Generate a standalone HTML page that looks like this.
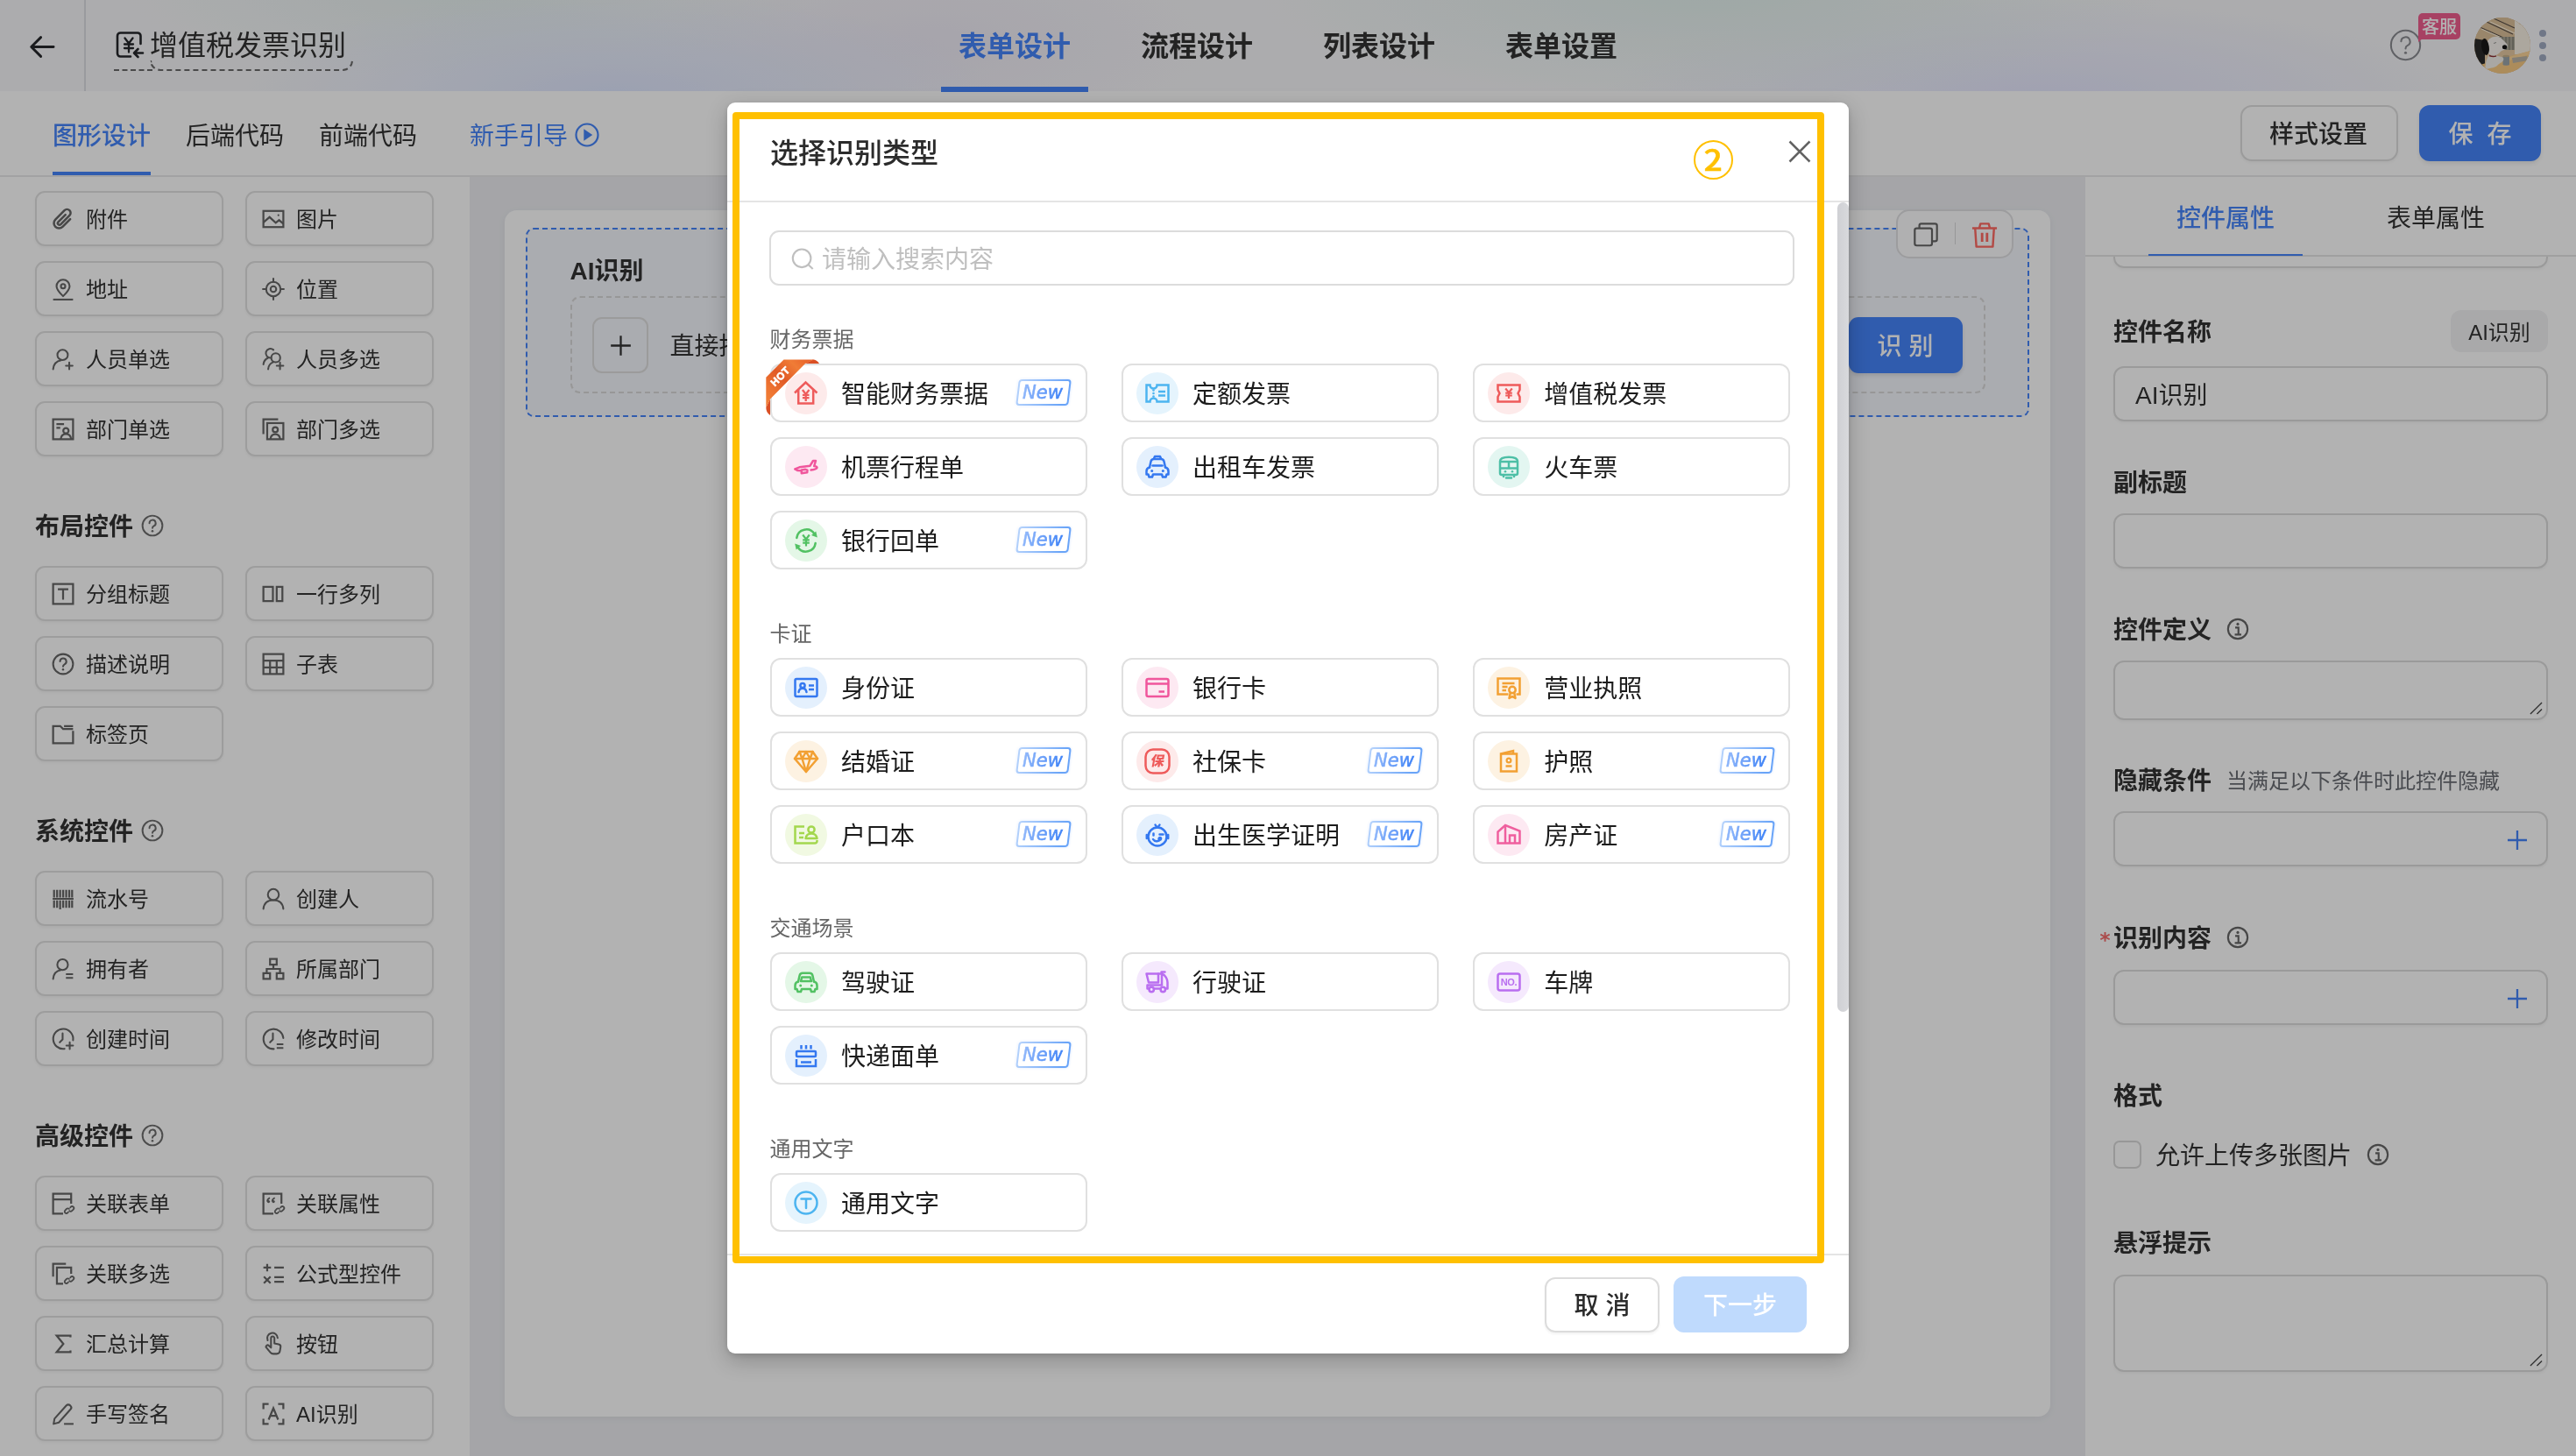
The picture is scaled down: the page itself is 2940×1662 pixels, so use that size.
<!DOCTYPE html>
<html lang="zh-CN">
<head>
<meta charset="utf-8">
<title>增值税发票识别 - 表单设计</title>
<style>
*{box-sizing:border-box;margin:0;padding:0}
html,body{width:2940px;height:1662px;overflow:hidden;background:#ecedf1}
body{font-family:"Liberation Sans","Noto Sans CJK SC",sans-serif;color:#333;-webkit-font-smoothing:antialiased}
#app{position:relative;width:2940px;height:1662px;overflow:hidden;background:#ecedf1}
#app div,#app svg,#app i,#app span.abs{position:absolute}
#hdr,#bar,#left,#canvas,#right,#modal{will-change:transform}
svg{display:block;overflow:visible}
i{font-style:normal}

/* ---------- top header ---------- */
#hdr{left:0;top:0;width:2940px;height:104px;z-index:1;background:
radial-gradient(ellipse 440px 120px at 700px 110px,rgba(222,230,255,1),rgba(222,230,255,0)),
radial-gradient(ellipse 400px 100px at 540px -10px,rgba(231,241,240,1),rgba(231,241,240,0)),
radial-gradient(ellipse 340px 120px at 1060px 50px,rgba(238,234,246,.9),rgba(238,234,246,0)),
radial-gradient(ellipse 520px 130px at 1950px -10px,rgba(227,241,238,1),rgba(227,241,238,0)),
radial-gradient(ellipse 500px 120px at 2330px 114px,rgba(229,231,255,1),rgba(229,231,255,0)),
#f7f7f9}
#hdr .back{left:33px;top:39px;width:29px;height:29px}
#hdr .vdiv{left:96px;top:0;width:2px;height:104px;background:#dcdde2}
#hdr .ticon{left:132px;top:35px;width:32px;height:32px}
#hdr .title{left:171px;top:30px;height:44px;line-height:44px;font-size:32px;color:#333;white-space:nowrap}
#hdr .tdash{left:130px;top:79px;width:44px;height:0;border-top:2px dashed #6a6a6a}
#hdr .tdash2{left:171px;top:69px;width:232px;height:12px;border:2px dashed #6a6a6a;border-top:none;border-radius:0 0 12px 12px}
#hdr .nt{top:0;width:168px;height:105px;line-height:107px;text-align:center;font-size:32px;font-weight:700;color:#333;white-space:nowrap}
#hdr .nt.on{color:#4684fa;border-bottom:6px solid #4684fa}
#hdr .help{left:2727px;top:33px;width:37px;height:37px}
#hdr .kf{left:2760px;top:15px;width:48px;height:30px;border-radius:5px 5px 5px 0;background:#f05d8f;color:#fff;font-size:20px;font-weight:500;font-family:"Liberation Sans","Noto Sans CJK SC Medium","Noto Sans CJK SC",sans-serif;line-height:33px;text-align:center;white-space:nowrap}
#hdr .kf::after{content:"";position:absolute;left:0;top:29px;border-left:5px solid #f05d8f;border-bottom:4px solid transparent}
#hdr .avatar{left:2824px;top:20px;width:64px;height:64px;border-radius:50%;overflow:hidden;background:#c9b79c}
#hdr .avatar svg{left:0;top:0;width:64px;height:64px}
#hdr .dots{left:2898px;top:34px;width:8px;height:36px}
#hdr .dots i{left:0;width:8px;height:8px;border-radius:50%;background:#a1abc2}
#hdr .dots i:nth-child(1){top:0}
#hdr .dots i:nth-child(2){top:14px}
#hdr .dots i:nth-child(3){top:28px}

/* ---------- second bar ---------- */
#bar{left:0;top:104px;width:2940px;height:98px;background:#fff;border-bottom:2px solid #e9e9ea}
#bar .bt{top:32px;height:40px;line-height:40px;font-size:28px;color:#333;white-space:nowrap}
#bar .bt.on{color:#4684fa;font-weight:500;font-family:"Liberation Sans","Noto Sans CJK SC Medium","Noto Sans CJK SC",sans-serif}
#bar .bt.on::after{content:"";position:absolute;left:0;right:0;top:60px;height:4px;background:#4684fa}
#bar .bt.guide{color:#4684fa}
#bar .play{left:655.5px;top:36px;width:28px;height:28px}
#bar .btn-style{left:2557px;top:16px;width:180px;height:64px;border:2px solid #dedede;border-radius:13px;background:#fff;font-size:28px;font-weight:500;font-family:"Liberation Sans","Noto Sans CJK SC Medium","Noto Sans CJK SC",sans-serif;line-height:64px;text-indent:-2px;text-align:center;color:#333;box-shadow:0 2px 3px rgba(0,0,0,.04)}
#bar .btn-save{left:2761px;top:16px;width:139px;height:64px;border-radius:12px;background:#4684fa;font-size:28px;font-weight:500;font-family:"Liberation Sans","Noto Sans CJK SC Medium","Noto Sans CJK SC",sans-serif;word-spacing:8px;line-height:68px;text-align:center;color:#fff;box-shadow:0 3px 4px rgba(0,0,0,.08)}

/* ---------- left palette ---------- */
#left{left:0;top:202px;width:536px;height:1460px;background:#fff;overflow:hidden}
#left .cbtn{margin-top:-202px;width:215px;height:63px;border:2px solid #e1e1e1;border-radius:11px;background:#fff;box-shadow:0 2px 3px rgba(0,0,0,.04);font-size:24px;color:#333;white-space:nowrap}
#left .cbtn .ci{left:17px;top:17px;width:26px;height:26px}
#left .cbtn span{position:absolute;left:56px;top:11px;height:40px;line-height:40px}
#left .lhead{margin-top:-200px;left:40px;height:40px;line-height:40px;font-size:28px;font-weight:700;color:#333;white-space:nowrap;width:300px}
#left .lhead span{position:absolute;left:0;top:0}
#left .lhead .hq{left:121px;top:5px;width:26px;height:26px}

/* ---------- canvas ---------- */
#canvas{left:576px;top:240px;width:1764px;height:1377px;background:#fff;border-radius:14px;box-shadow:0 2px 10px rgba(0,0,0,.05)}
#canvas .field{left:24px;top:20px;width:1716px;height:216px;border:2px dashed #4684fa;border-radius:9px;background:#f4f6fc}
#canvas .fl{left:48.5px;top:28px;height:40px;line-height:40px;font-size:28px;font-weight:700;color:#333;white-space:nowrap}
#canvas .drop{left:48.5px;top:76px;width:1615px;height:111px;border:2px dashed #d9d9d9;border-radius:11px}
#canvas .plus{left:23.5px;top:21.5px;width:64px;height:64px;border:2px solid #dedede;border-radius:11px}
#canvas .plus svg{left:13.5px;top:14px;width:33px;height:33px}
#canvas .dt{left:112px;top:36px;height:40px;line-height:40px;font-size:28px;color:#333;white-space:nowrap}
#canvas .recog{left:1457px;top:22px;width:130px;height:64px;border-radius:11px;background:#4684fa;color:#fff;font-size:28px;font-weight:500;font-family:"Liberation Sans","Noto Sans CJK SC Medium","Noto Sans CJK SC",sans-serif;line-height:68px;text-align:center;white-space:nowrap;box-shadow:0 3px 4px rgba(0,0,0,.1)}
#canvas .acts{left:1588px;top:-1px;width:134px;height:56px;border:2px solid #e0e0e2;border-radius:15px;background:#fdfdfe}
#canvas .acts .cp{left:18px;top:13px;width:28px;height:28px}
#canvas .acts i{left:64.5px;top:13px;width:1.5px;height:25px;background:#d9d9dc}
#canvas .acts .del{left:84px;top:12px;width:30px;height:30px}

/* ---------- right panel ---------- */
#right{left:2380px;top:202px;width:560px;height:1460px;background:#fff;overflow:hidden}
#right .rtabs{left:0;top:0;width:560px;height:91px;border-bottom:2px solid #e6e6e6;background:#fff;z-index:2}
#right .rt{top:0;width:176px;height:90px;line-height:96px;text-align:center;font-size:28px;color:#333;white-space:nowrap}
#right .rt.on{color:#4684fa;border-bottom:2px solid #4684fa;font-weight:500;font-family:"Liberation Sans","Noto Sans CJK SC Medium","Noto Sans CJK SC",sans-serif;}
#right .stub{left:32px;top:59px;width:496px;height:45px;border:2px solid #dddddd;border-radius:12px;box-shadow:0 2px 3px rgba(0,0,0,.04)}
#right .rl{left:32px;height:40px;line-height:40px;font-size:28px;font-weight:700;color:#333;white-space:nowrap;width:520px}
#right .rl em{font-style:normal;font-weight:400;font-size:24px;color:#6b6e74;margin-left:17px;vertical-align:top}
#right .rl .info{left:129px;top:5px;width:26px;height:26px}
#right .rl b{position:absolute;left:-15.5px;top:1px;color:#f56c6c;font-size:23px;font-weight:700;font-family:"DejaVu Sans","Liberation Sans",sans-serif}
#right .inp{left:32px;width:496px;height:63px;border:2px solid #dddddd;border-radius:12px;background:#fff;box-shadow:0 2px 3px rgba(0,0,0,.04)}
#right .inp span{position:absolute;left:23px;top:12px;height:40px;line-height:40px;font-size:28px;color:#333;white-space:nowrap}
#right .inp .pl{left:446.5px;top:18.5px;width:24px;height:24px}
#right .inp .rs{right:4px;bottom:4px;width:15px;height:15px}
#right .tag{left:417px;top:152px;width:111px;height:48px;border-radius:12px;background:#f2f2f4;font-size:24px;line-height:51px;text-align:center;color:#333;white-space:nowrap}
#right .chk{left:32px;top:1100px;width:32px;height:32px;border:2px solid #d9d9d9;border-radius:7px;background:#fff}
#right .chkt{left:80px;top:1098px;height:40px;line-height:40px;font-size:28px;color:#333;white-space:nowrap;width:420px}
#right .chkt .info{left:240.5px;top:5px;width:26px;height:26px}

/* ---------- mask & modal ---------- */
#mask{left:0;top:0;width:2940px;height:1662px;background:rgba(0,0,0,.3);z-index:10}
#modal{z-index:11;left:830px;top:117px;width:1280px;height:1428px;background:#fff;border-radius:9px;box-shadow:0 8px 24px rgba(0,0,0,.22),0 2px 6px rgba(0,0,0,.12)}
#modal .mh{left:49px;top:36px;height:44px;line-height:44px;font-size:32px;font-weight:500;font-family:"Liberation Sans","Noto Sans CJK SC Medium","Noto Sans CJK SC",sans-serif;color:#2b2b2b;white-space:nowrap}
#modal .mx{left:1211px;top:43px;width:26px;height:26px}
#modal .mbody{left:0;top:112px;width:1280px;height:1203px;border-top:2px solid #e4e4e4;overflow:hidden;padding:0}
#modal .mbody>div,#modal .mbody .sec>div,#modal .card{position:relative !important}
#modal .search{margin:32px 0 0 48px;width:1169.5px;height:63px;border:2px solid #dcdcdc;border-radius:11px}
#modal .search svg{left:23px;top:17.5px;width:26px;height:26px}
#modal .search span{position:absolute;left:58px;top:12px;height:40px;line-height:40px;font-size:28px;color:#bfbfbf;white-space:nowrap}
#modal .sec{margin:38px 0 0 48.5px;width:1231px}
#modal .search + .sec{margin-top:43.3px}
#modal .st{height:36px;line-height:37px;font-size:24px;color:#666;margin-bottom:10px}
#modal .grid{display:flex;flex-wrap:wrap;width:1231px}
#modal .card{width:362.4px;height:67px;margin:0 38.7px 17px 0;border:2px solid #e0e0e0;border-radius:12px;background:#fff}
#modal .card .circ{position:absolute;left:15.8px;top:7.5px;width:48px;height:48px;border-radius:50%}
#modal .card .circ svg{left:10px;top:10px;width:28px;height:28px}
#modal .card .cn{position:absolute;left:79.5px;top:13.5px;height:40px;line-height:40px;font-size:28px;color:#1c1c1c;white-space:nowrap}
#modal .card .new{position:absolute;right:17.5px;top:16px;width:60px;height:30px;border:2px solid #69a4f8;border-radius:4px;transform:skewX(-7deg);background:#fff;box-shadow:0 0 3px rgba(90,150,255,.3)}
#modal .card .new::after{content:"";position:absolute;left:-3px;top:-3px;right:-3px;bottom:-3px;background:linear-gradient(100deg,rgba(255,255,255,.52),rgba(255,255,255,.26) 45%,rgba(255,255,255,0) 85%)}
#modal .card .new i{position:absolute;left:0;top:0;width:56px;height:26px;line-height:26px;text-align:center;font-size:21px;letter-spacing:0;margin:-.5px 0 0 -1px;font-style:italic;color:#3b80f7;-webkit-text-stroke:.55px #3b80f7;transform:skewX(7deg);font-family:"DejaVu Sans","Liberation Sans",sans-serif}
#modal .card .hot{left:-6px;top:-6px;width:54px;height:54px}
#modal .sbar{left:1266px;top:114px;width:14px;height:1200px}
#modal .sbar i{left:0.5px;top:0;width:13px;height:924px;border-radius:6.5px;background:linear-gradient(90deg,#cfd0d4,#d8d9dc)}
#modal .mf{left:0;top:1314px;width:1280px;height:114px;border-top:2px solid #e4e4e4}
#modal .b-cancel{left:933px;top:25px;width:131px;height:63px;border:2px solid #dcdcdc;border-radius:12px;font-size:28px;font-weight:500;font-family:"Liberation Sans","Noto Sans CJK SC Medium","Noto Sans CJK SC",sans-serif;line-height:61px;text-align:center;color:#2b2b2b;white-space:nowrap;box-shadow:0 2px 3px rgba(0,0,0,.05)}
#modal .b-next{left:1080px;top:24px;width:152px;height:64px;border-radius:12px;background:#bfdafd;color:#fff;font-size:28px;font-weight:500;font-family:"Liberation Sans","Noto Sans CJK SC Medium","Noto Sans CJK SC",sans-serif;line-height:67px;text-align:center;white-space:nowrap}
#modal .hl{left:6px;top:11px;width:1246px;height:1314px;border:8px solid #ffc000;border-radius:4px}
#modal .step{left:1102.7px;top:42.6px;width:45px;height:45px;border:2.3px solid #ffc000;border-radius:50%}
#modal .step span{position:absolute;left:.8px;top:0;width:40.4px;height:40.4px;line-height:37.3px;text-align:center;color:#ffc000;-webkit-text-stroke:.45px #ffc000;font-size:33.5px;font-weight:500;font-family:"Noto Sans CJK SC Medium","Noto Sans CJK SC","Liberation Sans",sans-serif;transform:scaleX(1.12)}

</style>
</head>
<body>
<div id="app">
  <div id="hdr">
    <svg class="back" viewBox="0 0 32 32"><path d="M15 4L3 16l12 12M3.500 16H31" fill="none" stroke="#26282c" stroke-width="3.200" stroke-linecap="round" stroke-linejoin="round"/></svg>
    <div class="vdiv"></div>
    <svg class="ticon" viewBox="0 0 32 32"><g fill="none" stroke="#26282c" stroke-width="2.600" stroke-linecap="round" stroke-linejoin="round"><path d="M28.500 15V6a3.500 3.500 0 0 0-3.500-3.500H5.500A3.500 3.500 0 0 0 2 6v20a3.500 3.500 0 0 0 3.500 3.500H17"/><path d="M10.500 8.500l4.500 6 4.500-6M15 14.500v10M10 15.500h10M10 20h10" stroke-width="2.300"/><path d="M31 25.500H21.500M25.500 21l-4.500 4.500 4.500 4.500"/></g></svg>
    <div class="title">增值税发票识别</div>
    <div class="tdash"></div><div class="tdash2"></div>
    <div class="nav">
      <div class="nt on" style="left:1074px">表单设计</div>
      <div class="nt" style="left:1282px">流程设计</div>
      <div class="nt" style="left:1490px">列表设计</div>
      <div class="nt" style="left:1698px">表单设置</div>
    </div>
    <svg class="help" viewBox="0 0 40 40"><g fill="none" stroke="#8a8b91" stroke-width="2.200" stroke-linecap="round"><circle cx="20" cy="20" r="18"/><path d="M14.500 15.500a5.500 5.500 0 1 1 8 5c-1.700.900-2.500 1.900-2.500 3.800"/></g><circle cx="20" cy="29.500" r="1.700" fill="#8a8b91"/></svg>
    <div class="kf">客服</div>
    <div class="avatar"><svg viewBox="0 0 64 64"><rect width="64" height="64" fill="#e6c9a2"/><path d="M0 0h64v26L30 30 0 24z" fill="#dcc09a"/><g stroke="#5a5048" stroke-width="1.300" fill="none"><path d="M4 10l36 16M12 4l32 15M22 1l24 11"/></g><g stroke="#fff6e2" stroke-width="1" fill="none"><path d="M8 13l34 15M18 5l28 13"/></g><path d="M28 22h20v15H28z" fill="#a9a595"/><g stroke="#66655c" stroke-width=".800"><path d="M32 22v15M36 22v15M40 22v15M44 22v15"/></g><path d="M46 0h18v42H46z" fill="#f6efe2"/><path d="M46 0l6 8h12V0z" fill="#d9b88a"/><path d="M0 24l12 2v30L0 58z" fill="#2a2a2a"/><path d="M0 64V56l30-9 34-9v26z" fill="#f7c983"/><path d="M10 56l20-8 34-10v4L30 52 12 60z" fill="#fbd59a"/><path d="M43 46l17-2 2 5-18 3z" fill="#b9b3a8"/><path d="M32.500 44h7.500v9.500a3.750 1.200 0 0 1-7.500 0z" fill="#9aa4aa"/><ellipse cx="36.250" cy="44" rx="3.750" ry="1.200" fill="#c6b08a"/><path d="M15 46c0-3 4-4 8-3l8 2c2 .500 3 2 2 4l-2 2c-4 2-5 5-9 6l-9 2c-1-4 0-9 2-13z" fill="#f3f0ea"/><path d="M14 30c1-6 7-9 13-8 4 .800 6 4 9 7 2 1.500 2.500 4 1 6-2 2.500-6 2-8 5-2 2.500-6 4-10 3-4-1.500-6-7-5-13z" fill="#f6f3ee"/><path d="M17 43.500c3 1.200 6 1.200 8 .300" stroke="#8c2f33" stroke-width="1.400" fill="none"/><ellipse cx="12.500" cy="33.500" rx="4.300" ry="9.500" fill="#171717" transform="rotate(-8 12.500 33.500)"/><ellipse cx="34.600" cy="33.800" rx="2.700" ry="2.500" fill="#141414"/><path d="M22 29.500l3-1" stroke="#555" stroke-width=".600"/></svg></div>
    <div class="dots"><i></i><i></i><i></i></div>
  </div>
  <div id="bar">
    <div class="bt on" style="left:60px">图形设计</div>
    <div class="bt" style="left:212px">后端代码</div>
    <div class="bt" style="left:364px">前端代码</div>
    <div class="bt guide" style="left:536px">新手引导</div>
    <svg class="play" viewBox="0 0 28 28"><circle cx="14" cy="14" r="12.500" fill="none" stroke="#4684fa" stroke-width="2.200"/><path d="M10.300 7.300l9.900 6.700-9.900 6.700z" fill="#4684fa"/></svg>
    <div class="btn-style">样式设置</div>
    <div class="btn-save">保 存</div>
  </div>
  <div id="left">
<div class="cbtn" style="left:40px;top:218px"><svg class="ci" viewBox="0 0 24 24"><g transform="translate(12 12) rotate(45) scale(1.22) translate(-12 -11.5)" fill="none" stroke="#666666" stroke-width="1.9" stroke-linecap="round" stroke-linejoin="round" stroke-width="1.600"><path d="M16.400 7.200v9.300a4.400 4.400 0 0 1-8.800 0V5.400a3.100 3.100 0 0 1 6.200 0v10.800a1.500 1.500 0 0 1-3 0V7.400"/></g></svg><span>附件</span></div>
<div class="cbtn" style="left:280px;top:218px"><svg class="ci" viewBox="0 0 24 24"><g fill="none" stroke="#666666" stroke-width="2.050" stroke-linecap="butt" stroke-linejoin="miter"><rect x="1.5" y="3.5" width="21" height="17"/><path d="M1.5 15.5l6.5-5.5 6.5 6 3.5-2.8 4.5 3.8"/><circle cx="17.3" cy="8" r="1" fill="#666666" stroke="none"/></g></svg><span>图片</span></div>
<div class="cbtn" style="left:40px;top:298px"><svg class="ci" viewBox="0 0 24 24"><g fill="none" stroke="#666666" stroke-width="1.9" stroke-linecap="round" stroke-linejoin="round"><path d="M12 19.5c-4.600-4.400-6.900-7.500-6.900-10.500a6.900 6.900 0 0 1 13.800 0c0 3-2.300 6.100-6.900 10.500z"/><circle cx="12" cy="9" r="2.300"/><path d="M1.500 23h21" stroke-linecap="butt"/></g></svg><span>地址</span></div>
<div class="cbtn" style="left:280px;top:298px"><svg class="ci" viewBox="0 0 24 24"><g fill="none" stroke="#666666" stroke-width="1.9" stroke-linecap="round" stroke-linejoin="round"><circle cx="12" cy="12" r="7.600"/><circle cx="12" cy="12" r="3"/><path d="M12 1v3.400M12 19.600v3.400M1 12h3.400M19.600 12h3.400"/></g></svg><span>位置</span></div>
<div class="cbtn" style="left:40px;top:378px"><svg class="ci" viewBox="0 0 24 24"><g fill="none" stroke="#666666" stroke-width="1.9" stroke-linecap="round" stroke-linejoin="round"><circle cx="11.500" cy="7.500" r="5.500"/><path d="M1.500 22.500c.500-5.500 4-8.700 8.500-9.400"/><path d="M18.500 15.500v7M15 19h7"/></g></svg><span>人员单选</span></div>
<div class="cbtn" style="left:280px;top:378px"><svg class="ci" viewBox="0 0 24 24"><g fill="none" stroke="#666666" stroke-width="1.9" stroke-linecap="round" stroke-linejoin="round"><path d="M9.500 10.500a4.800 4.800 0 1 1 2.600-8.300"/><path d="M1.500 17.500c.4-3.400 2-5.500 4.600-6.600"/><circle cx="14.500" cy="10.500" r="4.700"/><path d="M6.500 22.500c.4-4 2.600-6.500 5.500-7.400"/><path d="M19 15.500v7M15.500 19h7"/></g></svg><span>人员多选</span></div>
<div class="cbtn" style="left:40px;top:458px"><svg class="ci" viewBox="0 0 24 24"><g fill="none" stroke="#666666" stroke-width="2.050" stroke-linecap="butt" stroke-linejoin="miter"><rect x="1.500" y="1.500" width="21" height="21"/><path d="M5 6.500h8M5 10.500h4"/><circle cx="15" cy="13.500" r="2.800"/><path d="M9.500 22.500c.4-3.600 2.600-5.500 5.500-5.500s5.100 1.900 5.500 5.500"/></g></svg><span>部门单选</span></div>
<div class="cbtn" style="left:280px;top:458px"><svg class="ci" viewBox="0 0 24 24"><g fill="none" stroke="#666666" stroke-width="2.050" stroke-linecap="butt" stroke-linejoin="miter"><path d="M1.500 17V1.500H17"/><rect x="5.500" y="5.500" width="17" height="17"/><circle cx="14" cy="12.500" r="2.700"/><path d="M8.800 22.500c.4-3.600 2.400-5.300 5.200-5.300s4.800 1.700 5.200 5.300"/></g></svg><span>部门多选</span></div>
<div class="lhead" style="top:580px"><span>布局控件</span><svg class="hq" viewBox="0 0 24 24"><g fill="none" stroke="#6e6e6e" stroke-width="1.800" stroke-linecap="round"><circle cx="12" cy="12" r="10.500"/><path d="M8.800 9.400a3.300 3.300 0 1 1 4.700 3c-1 .500-1.500 1.100-1.500 2.200"/></g><circle cx="12" cy="17.800" r="1.200" fill="#6e6e6e"/></svg></div>
<div class="cbtn" style="left:40px;top:646px"><svg class="ci" viewBox="0 0 24 24"><g fill="none" stroke="#666666" stroke-width="2.050" stroke-linecap="butt" stroke-linejoin="miter"><rect x="1.500" y="1.500" width="21" height="21"/><path d="M6.500 7h11M12 7v11"/></g></svg><span>分组标题</span></div>
<div class="cbtn" style="left:280px;top:646px"><svg class="ci" viewBox="0 0 24 24"><g fill="none" stroke="#666666" stroke-width="2.050" stroke-linecap="butt" stroke-linejoin="miter"><rect x="1.500" y="4.500" width="10" height="15"/><rect x="15.500" y="4.500" width="6" height="15"/></g></svg><span>一行多列</span></div>
<div class="cbtn" style="left:40px;top:726px"><svg class="ci" viewBox="0 0 24 24"><g fill="none" stroke="#666666" stroke-width="1.9" stroke-linecap="round" stroke-linejoin="round"><circle cx="12" cy="12" r="10.500"/><path d="M8.800 9.300a3.300 3.300 0 1 1 4.700 3c-1 .500-1.500 1.100-1.500 2.300"/><circle cx="12" cy="17.800" r="1.150" fill="#666666" stroke="none"/></g></svg><span>描述说明</span></div>
<div class="cbtn" style="left:280px;top:726px"><svg class="ci" viewBox="0 0 24 24"><g fill="none" stroke="#666666" stroke-width="2.050" stroke-linecap="butt" stroke-linejoin="miter"><rect x="1.500" y="1.500" width="21" height="21"/><path d="M1.500 8.500h21M1.500 15.500h21M8.500 8.500v14M15.500 8.500v14"/></g></svg><span>子表</span></div>
<div class="cbtn" style="left:40px;top:806px"><svg class="ci" viewBox="0 0 24 24"><g fill="none" stroke="#666666" stroke-width="2.050" stroke-linecap="butt" stroke-linejoin="miter"><path d="M22.500 8.500v13h-21v-18h7.500l3 3h10.500M13 3.500h9.500"/></g></svg><span>标签页</span></div>
<div class="lhead" style="top:928px"><span>系统控件</span><svg class="hq" viewBox="0 0 24 24"><g fill="none" stroke="#6e6e6e" stroke-width="1.800" stroke-linecap="round"><circle cx="12" cy="12" r="10.500"/><path d="M8.800 9.400a3.300 3.300 0 1 1 4.700 3c-1 .500-1.500 1.100-1.500 2.200"/></g><circle cx="12" cy="17.800" r="1.200" fill="#6e6e6e"/></svg></div>
<div class="cbtn" style="left:40px;top:994px"><svg class="ci" viewBox="0 0 24 24"><g fill="none" stroke="#666666" stroke-width="2.050" stroke-linecap="butt" stroke-linejoin="miter" stroke-width="1.600"><path d="M2.500 2.500v8M5.700 2.500v8M8.900 2.500v8M12.100 2.500v8M15.300 2.500v8M18.500 2.500v8M21.500 2.500v8M1 12h22M2.500 13.500v8M5.700 13.500v8M8.900 13.500v9.500M12.100 13.500v8M15.300 13.500v8M18.500 13.500v8M21.500 13.500v8"/></g></svg><span>流水号</span></div>
<div class="cbtn" style="left:280px;top:994px"><svg class="ci" viewBox="0 0 24 24"><g fill="none" stroke="#666666" stroke-width="1.9" stroke-linecap="round" stroke-linejoin="round"><circle cx="12" cy="7.500" r="5.800"/><path d="M1.500 22.500c.6-6 4.600-9.200 10.500-9.200s9.900 3.200 10.500 9.200"/></g></svg><span>创建人</span></div>
<div class="cbtn" style="left:40px;top:1074px"><svg class="ci" viewBox="0 0 24 24"><g fill="none" stroke="#666666" stroke-width="1.9" stroke-linecap="round" stroke-linejoin="round"><circle cx="11.500" cy="7.500" r="5.600"/><path d="M1.500 22.500c.5-5.400 3.800-8.600 8.300-9.300"/><path d="M15 17.500h7.500M15 21.500h7.500" stroke-linecap="butt"/></g></svg><span>拥有者</span></div>
<div class="cbtn" style="left:280px;top:1074px"><svg class="ci" viewBox="0 0 24 24"><g fill="none" stroke="#666666" stroke-width="2.050" stroke-linecap="butt" stroke-linejoin="miter"><rect x="8.500" y="1.500" width="7" height="6"/><rect x="1.500" y="16.500" width="7" height="6"/><rect x="15.500" y="16.500" width="7" height="6"/><path d="M12 7.500v4.500M5 16.500V12h14v4.500"/></g></svg><span>所属部门</span></div>
<div class="cbtn" style="left:40px;top:1154px"><svg class="ci" viewBox="0 0 24 24"><g fill="none" stroke="#666666" stroke-width="1.9" stroke-linecap="round" stroke-linejoin="round"><path d="M13.500 22.300a10.500 10.500 0 1 1 9-9"/><path d="M11.500 6v6.500l-3 3"/><path d="M19 15.500v7M15.500 19h7"/></g></svg><span>创建时间</span></div>
<div class="cbtn" style="left:280px;top:1154px"><svg class="ci" viewBox="0 0 24 24"><g fill="none" stroke="#666666" stroke-width="1.9" stroke-linecap="round" stroke-linejoin="round"><path d="M12.500 22.500a10.500 10.500 0 1 1 10-11.500"/><path d="M11.500 6v6.500l-3 3"/><path d="M15.500 17.500h7M15.500 21.500h7" stroke-linecap="butt"/></g></svg><span>修改时间</span></div>
<div class="lhead" style="top:1276px"><span>高级控件</span><svg class="hq" viewBox="0 0 24 24"><g fill="none" stroke="#6e6e6e" stroke-width="1.800" stroke-linecap="round"><circle cx="12" cy="12" r="10.500"/><path d="M8.800 9.400a3.300 3.300 0 1 1 4.700 3c-1 .500-1.500 1.100-1.500 2.200"/></g><circle cx="12" cy="17.800" r="1.200" fill="#6e6e6e"/></svg></div>
<div class="cbtn" style="left:40px;top:1342px"><svg class="ci" viewBox="0 0 24 24"><g fill="none" stroke="#666666" stroke-width="2.050" stroke-linecap="butt" stroke-linejoin="miter"><path d="M12 22.500H1.500v-21h19V12M1.500 7.500h19"/></g><circle cx="18.500" cy="18.500" r="6.500" fill="#fff" stroke="none"/><g fill="none" stroke="#666666" stroke-width="1.9" stroke-linecap="round" stroke-linejoin="round" stroke-width="1.600" transform="translate(18.500 18.500) scale(.88) translate(-18.500 -18.500)"><path d="M17.300 21.300l-.700.700a2.100 2.100 0 0 1-3-3l1.700-1.700a2.100 2.100 0 0 1 3 0"/><path d="M19.700 15.700l.700-.700a2.100 2.100 0 0 1 3 3l-1.700 1.700a2.100 2.100 0 0 1-3 0"/></g></svg><span>关联表单</span></div>
<div class="cbtn" style="left:280px;top:1342px"><svg class="ci" viewBox="0 0 24 24"><g fill="none" stroke="#666666" stroke-width="2.050" stroke-linecap="butt" stroke-linejoin="miter"><path d="M12 22.500H1.500v-21h19V12"/><path d="M8.300 5.800c-1.900.9-2.700 2.100-2.700 3.900M13.500 5.800c-1.900.9-2.700 2.100-2.700 3.900" stroke-width="1.700"/><circle cx="6.900" cy="9.800" r="1.500" fill="#666666" stroke="none"/><circle cx="12.100" cy="9.800" r="1.500" fill="#666666" stroke="none"/></g><circle cx="18.500" cy="18.500" r="6.500" fill="#fff" stroke="none"/><g fill="none" stroke="#666666" stroke-width="1.9" stroke-linecap="round" stroke-linejoin="round" stroke-width="1.600" transform="translate(18.500 18.500) scale(.88) translate(-18.500 -18.500)"><path d="M17.300 21.300l-.700.700a2.100 2.100 0 0 1-3-3l1.700-1.700a2.100 2.100 0 0 1 3 0"/><path d="M19.700 15.700l.700-.700a2.100 2.100 0 0 1 3 3l-1.700 1.700a2.100 2.100 0 0 1-3 0"/></g></svg><span>关联属性</span></div>
<div class="cbtn" style="left:40px;top:1422px"><svg class="ci" viewBox="0 0 24 24"><g fill="none" stroke="#666666" stroke-width="2.050" stroke-linecap="butt" stroke-linejoin="miter"><path d="M1.500 15V1.500H15"/><path d="M12 22.500H5.500v-17h15V12"/></g><circle cx="18.500" cy="18.500" r="6.500" fill="#fff" stroke="none"/><g fill="none" stroke="#666666" stroke-width="1.9" stroke-linecap="round" stroke-linejoin="round" stroke-width="1.600" transform="translate(18.500 18.500) scale(.88) translate(-18.500 -18.500)"><path d="M17.300 21.300l-.700.700a2.100 2.100 0 0 1-3-3l1.700-1.700a2.100 2.100 0 0 1 3 0"/><path d="M19.700 15.700l.700-.700a2.100 2.100 0 0 1 3 3l-1.700 1.700a2.100 2.100 0 0 1-3 0"/></g></svg><span>关联多选</span></div>
<div class="cbtn" style="left:280px;top:1422px"><svg class="ci" viewBox="0 0 24 24"><g fill="none" stroke="#666666" stroke-width="2.050" stroke-linecap="butt" stroke-linejoin="miter"><path d="M5.500 1.500v8M1.500 5.500h8M13 5.500h10M2 15l7 7M9 15l-7 7M13 15.500h10M13 20.500h10"/></g></svg><span>公式型控件</span></div>
<div class="cbtn" style="left:40px;top:1502px"><svg class="ci" viewBox="0 0 24 24"><g fill="none" stroke="#666666" stroke-width="2.050" stroke-linecap="butt" stroke-linejoin="miter" stroke-linejoin="miter"><path d="M19.800 5V3.300H5.200l7.100 8.700-7.100 8.700h14.600V19"/></g></svg><span>汇总计算</span></div>
<div class="cbtn" style="left:280px;top:1502px"><svg class="ci" viewBox="0 0 24 24"><g fill="none" stroke="#666666" stroke-width="1.9" stroke-linecap="round" stroke-linejoin="round"><path d="M9.500 12.500V6a1.800 1.800 0 0 1 3.600 0v5.500l4.500.9a2.500 2.500 0 0 1 2 2.900l-.7 4.200a3.500 3.500 0 0 1-3.400 3h-3.600a4 4 0 0 1-3-1.400l-4.200-5a1.700 1.700 0 0 1 2.500-2.300l2.300 2.200z"/><path d="M6 8.300a5.500 5.500 0 1 1 10.500-2.500"/></g></svg><span>按钮</span></div>
<div class="cbtn" style="left:40px;top:1582px"><svg class="ci" viewBox="0 0 24 24"><g fill="none" stroke="#666666" stroke-width="1.9" stroke-linecap="round" stroke-linejoin="round"><path d="M2 22.500l1-5.500L15.500 3a2.700 2.700 0 0 1 3.900 0l.4.400a2.700 2.700 0 0 1 0 3.800L7.500 21z"/><path d="M13 22.500h10" stroke-linecap="butt"/></g></svg><span>手写签名</span></div>
<div class="cbtn" style="left:280px;top:1582px"><svg class="ci" viewBox="0 0 24 24"><g fill="none" stroke="#666666" stroke-width="2.050" stroke-linecap="butt" stroke-linejoin="miter"><path d="M1.500 7V1.500H7M17 1.500h5.500V7M22.500 17v5.500H17M7 22.500H1.500V17"/><path d="M7 18l5-12 5 12M8.800 14h6.400"/></g></svg><span>AI识别</span></div>
  </div>
  <div id="canvas">
    <div class="field">
      <div class="fl">AI识别</div>
      <div class="drop">
        <div class="plus"><svg viewBox="0 0 32 32"><path d="M16 5v22M5 16h22" stroke="#333" stroke-width="2.2" fill="none"/></svg></div>
        <div class="dt">直接拖拽图片到此处或点击上传</div>
        <div class="recog">识 别</div>
      </div>
    </div>
    <div class="acts">
      <svg class="cp" viewBox="0 0 32 32"><g fill="none" stroke="#666" stroke-width="2.500" stroke-linejoin="round"><rect x="1.500" y="7.500" width="22.500" height="22.500" rx="2.500"/><path d="M7.500 7.500V4a2.500 2.500 0 0 1 2.500-2.500h18A2.500 2.500 0 0 1 30.500 4v18a2.500 2.500 0 0 1-2.500 2.500h-4"/></g></svg>
      <i></i>
      <svg class="del" viewBox="0 0 32 32"><g fill="none" stroke="#ff6a64" stroke-width="2.600" stroke-linejoin="round" stroke-linecap="butt"><path d="M1 8h30M9.500 8l1.500-5.500h10L22.500 8M4.500 8l1.500 22.500h20L27.500 8"/><path d="M13 13.500v11M19 13.500v11" stroke-width="3"/></g></svg>
    </div>
  </div>
  <div id="right">
    <div class="rtabs">
      <div class="rt on" style="left:72px">控件属性</div>
      <div class="rt" style="left:312px">表单属性</div>
    </div>
    <div class="stub"></div>
    <div class="rl" style="top:158px">控件名称</div>
    <div class="tag">AI识别</div>
    <div class="inp" style="top:216px"><span>AI识别</span></div>
    <div class="rl" style="top:330px">副标题</div>
    <div class="inp" style="top:384px"></div>
    <div class="rl" style="top:498px">控件定义<svg class="info" viewBox="0 0 28 28"><g fill="none" stroke="#666666" stroke-width="2.300"><circle cx="14" cy="14" r="12"/></g><circle cx="14" cy="8" r="1.700" fill="#666666"/><path d="M10.800 12.300h4v8.400M10.300 20.800h8" fill="none" stroke="#666666" stroke-width="2.300"/></svg></div>
    <div class="inp ta" style="top:552px;height:68px"><svg class="rs" viewBox="0 0 16 16"><path d="M15 1L1 15M15 9l-6 6" stroke="#444" stroke-width="1.4" fill="none"/></svg></div>
    <div class="rl" style="top:670px">隐藏条件<em>当满足以下条件时此控件隐藏</em></div>
    <div class="inp" style="top:724px"><svg class="pl" viewBox="0 0 24 24"><path d="M12 1v22M1 12h22" stroke="#4684fa" stroke-width="2.300" fill="none"/></svg></div>
    <div class="rl req" style="top:850px"><b>*</b>识别内容<svg class="info" viewBox="0 0 28 28"><g fill="none" stroke="#666666" stroke-width="2.300"><circle cx="14" cy="14" r="12"/></g><circle cx="14" cy="8" r="1.700" fill="#666666"/><path d="M10.800 12.300h4v8.400M10.300 20.800h8" fill="none" stroke="#666666" stroke-width="2.300"/></svg></div>
    <div class="inp" style="top:905px"><svg class="pl" viewBox="0 0 24 24"><path d="M12 1v22M1 12h22" stroke="#4684fa" stroke-width="2.300" fill="none"/></svg></div>
    <div class="rl" style="top:1030px">格式</div>
    <div class="chk"></div>
    <div class="chkt">允许上传多张图片<svg class="info" viewBox="0 0 28 28"><g fill="none" stroke="#666666" stroke-width="2.300"><circle cx="14" cy="14" r="12"/></g><circle cx="14" cy="8" r="1.700" fill="#666666"/><path d="M10.800 12.300h4v8.400M10.300 20.800h8" fill="none" stroke="#666666" stroke-width="2.300"/></svg></div>
    <div class="rl" style="top:1198px">悬浮提示</div>
    <div class="inp ta" style="top:1253px;height:111px"><svg class="rs" viewBox="0 0 16 16"><path d="M15 1L1 15M15 9l-6 6" stroke="#444" stroke-width="1.4" fill="none"/></svg></div>
  </div>
  <div id="mask"></div>
  <div id="modal">
    <div class="mh">选择识别类型</div>
    <svg class="mx" viewBox="0 0 26 26"><path d="M1.500 1.500l23 23M24.500 1.500l-23 23" stroke="#626262" stroke-width="2.500" fill="none"/></svg>
    <div class="mbody">
      <div class="search"><svg viewBox="0 0 26 26"><circle cx="12.100" cy="11.800" r="10.300" fill="none" stroke="#bfbfbf" stroke-width="2.100"/><path d="M19.400 19.100l5.300 5" stroke="#bfbfbf" stroke-width="2.100" stroke-linecap="butt"/></svg><span>请输入搜索内容</span></div>
<div class="sec"><div class="st">财务票据</div><div class="grid">
<div class="card"><svg class="hot" viewBox="0 0 66 70" style="left:-7px;top:-7px;width:66px;height:70px"><defs><linearGradient id="hg" x1="0.850" y1="0" x2="0" y2="0.850"><stop offset="0" stop-color="#e9652a"/><stop offset=".22" stop-color="#f07c36"/><stop offset=".52" stop-color="#e15a26"/><stop offset=".8" stop-color="#ee7431"/><stop offset="1" stop-color="#f07e37"/></linearGradient></defs><path d="M45 5L54 0.500c3 0 5 1.500 7 4.500z" fill="#da4f24"/><path d="M5 45.500L0.300 55c0 4 1.500 7 4.700 9z" fill="#da4f24"/><path d="M20.500 0.500H55L45 5 5 45.500 0.300 55V20.700z" fill="url(#hg)"/><text x="0" y="0" transform="translate(19.300 22.300) rotate(-45)" text-anchor="middle" font-family="Liberation Sans,sans-serif" font-weight="700" font-size="11.500" letter-spacing="0.500" fill="#fff" stroke="#fff" stroke-width="0.700">HOT</text></svg><span class="circ" style="background:#fdeaea;color:#ee5b5b"><svg viewBox="0 0 28 28"><g fill="none" stroke="currentColor" stroke-width="2.500" stroke-linecap="butt" stroke-linejoin="miter"><path d="M1 13.500L13.500 1.500 26.500 13.500"/><path d="M5.200 10v15.500h17V10"/></g><g fill="none" stroke="currentColor" stroke-width="2.3" stroke-linecap="butt" stroke-linejoin="miter"><path d="M9.9 10.0L13.7 14.9L17.5 10.0M13.7 14.9V23.0M9.9 15.9H17.5M9.9 19.1H17.5"/></g></svg></span><span class="cn">智能财务票据</span><span class="new"><i>New</i></span></div>
<div class="card"><span class="circ" style="background:#e5f4fd;color:#4cb4f0"><svg viewBox="0 0 28 28"><g fill="none" stroke="currentColor" stroke-width="2.500" stroke-linecap="butt" stroke-linejoin="miter" stroke-linejoin="round"><path d="M1.500 4.500h4a4 4 0 0 0 8 0h13v19h-13a4 4 0 0 0-8 0h-4z"/><path d="M15 12h8M15 16.500h8"/></g><g fill="currentColor"><circle cx="9.500" cy="10.500" r="1.300"/><circle cx="9.500" cy="14" r="1.300"/><circle cx="9.500" cy="17.500" r="1.300"/></g></svg></span><span class="cn">定额发票</span></div>
<div class="card"><span class="circ" style="background:#fdeaea;color:#ee5b5b"><svg viewBox="0 0 28 28"><g fill="none" stroke="currentColor" stroke-width="2.500" stroke-linecap="butt" stroke-linejoin="miter" stroke-linejoin="round"><path d="M1.500 4.500h25v5.500l-2 4 2 4v5.500h-25v-5.500l2-4-2-4z"/></g><g fill="none" stroke="currentColor" stroke-width="2.2" stroke-linecap="butt" stroke-linejoin="miter"><path d="M10.2 8.5L14.0 12.9L17.8 8.5M14.0 12.9V20.0M10.2 13.7H17.8M10.2 16.5H17.8"/></g></svg></span><span class="cn">增值税发票</span></div>
<div class="card"><span class="circ" style="background:#fde9f2;color:#f0569c"><svg viewBox="0 0 28 28"><g fill="none" stroke="currentColor" stroke-width="2.500" stroke-linecap="round" stroke-linejoin="round" stroke-width="2.300"><path d="M1.500 16.500l5-2.200 12-1.600 3.500-5.700h3l-1.800 6c2.600.400 3.300 1 3.300 1.800s-1.500 1.700-4 2.200l-3 .500"/><path d="M8.500 18.200l-4.500-.200-2.500-1.500"/><path d="M8.800 17.500l4.500-.700 2.200.800-.300 2.700-6.400 1z"/></g></svg></span><span class="cn">机票行程单</span></div>
<div class="card"><span class="circ" style="background:#e4f0fd;color:#3478f0"><svg viewBox="0 0 28 28"><g fill="none" stroke="currentColor" stroke-width="2.500" stroke-linecap="round" stroke-linejoin="round"><path d="M10 4.500l1-2.500h6l1 2.500"/><path d="M5 14.500l1.500-6.800a3.500 3.500 0 0 1 3.400-2.700h8.200a3.500 3.500 0 0 1 3.400 2.700L23 14.500"/><path d="M5 14.500a4.500 4.500 0 0 0-3.500 4.400v3.600h2l1 3h3.500l1-3h10l1 3h3.500l1-3h2v-3.600a4.500 4.500 0 0 0-3.500-4.400"/><path d="M8.500 12.500h11"/></g><g fill="currentColor"><circle cx="7.700" cy="18.500" r="1.500"/><circle cx="20.300" cy="18.500" r="1.500"/></g></svg></span><span class="cn">出租车发票</span></div>
<div class="card"><span class="circ" style="background:#e3f6f1;color:#4dbfa6"><svg viewBox="0 0 28 28"><g fill="none" stroke="currentColor" stroke-width="2.500" stroke-linecap="butt" stroke-linejoin="miter" stroke-linejoin="round"><path d="M4 21V7.500c0-3.400 4.500-4.800 10-4.800s10 1.400 10 4.800V21a2 2 0 0 1-2 2H6a2 2 0 0 1-2-2z"/><path d="M4 8h20M4 15.500h20M14 8v7.500"/><path d="M8 23v2M20 23v2M11 26.500h6" stroke-linecap="round"/></g><g fill="currentColor"><circle cx="10" cy="19.300" r="1.300"/><circle cx="18" cy="19.300" r="1.300"/></g></svg></span><span class="cn">火车票</span></div>
<div class="card"><span class="circ" style="background:#e4f7e7;color:#52c163"><svg viewBox="0 0 28 28"><g fill="none" stroke="currentColor" stroke-width="2.500" stroke-linecap="round" stroke-linejoin="round" stroke-width="2.300"><path d="M4.500 21.500A11 11 0 0 0 24.700 17"/><path d="M23.500 6.500A11 11 0 0 0 3.300 11"/></g><path d="M1.200 17.500l1.500 7 5.300-4.500z" fill="currentColor"/><path d="M26.800 10.500l-1.500-7-5.300 4.500z" fill="currentColor"/><g fill="none" stroke="currentColor" stroke-width="2.2" stroke-linecap="butt" stroke-linejoin="miter"><path d="M10.2 7.5L14.0 12.4L17.8 7.5M14.0 12.4V20.5M10.2 13.4H17.8M10.2 16.6H17.8"/></g></svg></span><span class="cn">银行回单</span><span class="new"><i>New</i></span></div>
</div></div>
<div class="sec"><div class="st">卡证</div><div class="grid">
<div class="card"><span class="circ" style="background:#e4f0fd;color:#3478f0"><svg viewBox="0 0 28 28"><g fill="none" stroke="currentColor" stroke-width="2.500" stroke-linecap="butt" stroke-linejoin="miter" stroke-linejoin="round"><rect x="1.500" y="4" width="25" height="20" rx="1.500"/><path d="M17 11.500h6M17 16h6"/></g><g fill="none" stroke="currentColor" stroke-width="2.500" stroke-linecap="round" stroke-linejoin="round" stroke-width="2.300"><circle cx="10" cy="11.500" r="2.600"/><path d="M5.500 19c.5-3 2.200-4.300 4.500-4.300s4 1.300 4.500 4.300"/></g></svg></span><span class="cn">身份证</span></div>
<div class="card"><span class="circ" style="background:#fde9f2;color:#f0569c"><svg viewBox="0 0 28 28"><g fill="none" stroke="currentColor" stroke-width="2.500" stroke-linecap="butt" stroke-linejoin="miter" stroke-linejoin="round"><rect x="1.500" y="4" width="25" height="20" rx="2"/><path d="M1.500 9.500h25M15.500 18.500h6.500"/></g></svg></span><span class="cn">银行卡</span></div>
<div class="card"><span class="circ" style="background:#fdf2e2;color:#f2a033"><svg viewBox="0 0 28 28"><g fill="none" stroke="currentColor" stroke-width="2.500" stroke-linecap="butt" stroke-linejoin="miter" stroke-linejoin="round"><path d="M13.500 21.500h-12v-18h25v18h-4"/><path d="M6.500 9h14M6.500 13h6M6.500 17h4.500"/></g><g fill="none" stroke="currentColor" stroke-width="2.500" stroke-linecap="round" stroke-linejoin="round" stroke-width="2.200"><circle cx="18" cy="16.500" r="3.700"/><path d="M15.800 19.800l-1.300 6.200 3.500-2 3.500 2-1.300-6.200"/></g></svg></span><span class="cn">营业执照</span></div>
<div class="card"><span class="circ" style="background:#fdf2e2;color:#f2a033"><svg viewBox="0 0 28 28"><g fill="none" stroke="currentColor" stroke-width="2.500" stroke-linecap="round" stroke-linejoin="round" stroke-width="2.300" stroke-linejoin="miter"><path d="M6.500 3h15l5.500 8L14 26 1 11z"/><path d="M1 11h26M9.500 11L14 26l4.500-15M6.500 3l3 8 4.500-8 4.500 8 3-8"/></g></svg></span><span class="cn">结婚证</span><span class="new"><i>New</i></span></div>
<div class="card"><span class="circ" style="background:#fdeaea;color:#ee5b5b"><svg viewBox="0 0 28 28"><g fill="none" stroke="currentColor" stroke-width="2.500" stroke-linecap="round" stroke-linejoin="round"><rect x=".500" y=".500" width="27" height="27" rx="8.500"/></g><text x="14.300" y="19.500" text-anchor="middle" font-family="Noto Sans CJK SC,sans-serif" font-size="15.500" font-weight="900" fill="currentColor" transform="skewX(-11)" style="transform-origin:14px 14px">保</text></svg></span><span class="cn">社保卡</span><span class="new"><i>New</i></span></div>
<div class="card"><span class="circ" style="background:#fdf2e2;color:#f2a033"><svg viewBox="0 0 28 28"><g fill="none" stroke="currentColor" stroke-width="2.500" stroke-linecap="butt" stroke-linejoin="miter" stroke-linejoin="round"><path d="M5 5.500v20h18v-20z"/><path d="M5 5.500L19 2v3.500"/><path d="M10.500 19.500h7"/></g><circle cx="14" cy="13" r="2.400" fill="none" stroke="currentColor" stroke-width="2.200"/></svg></span><span class="cn">护照</span><span class="new"><i>New</i></span></div>
<div class="card"><span class="circ" style="background:#f1f9e2;color:#a3d74e"><svg viewBox="0 0 28 28"><g fill="none" stroke="currentColor" stroke-width="2.500" stroke-linecap="butt" stroke-linejoin="miter"><path d="M12 4.500H1.500v19H24a2.500 2.500 0 0 0 2.500-2.500v-1"/><path d="M6 12h6M6 17h5"/></g><g fill="none" stroke="currentColor" stroke-width="2.500" stroke-linecap="round" stroke-linejoin="round" stroke-width="2.300"><circle cx="20" cy="8" r="3.600"/><path d="M13.500 18c.6-3.600 3-5.500 6.500-5.500s5.900 1.900 6.500 5.500z"/></g></svg></span><span class="cn">户口本</span><span class="new"><i>New</i></span></div>
<div class="card"><span class="circ" style="background:#e4f0fd;color:#3478f0"><svg viewBox="0 0 28 28"><g fill="none" stroke="currentColor" stroke-width="2.500" stroke-linecap="round" stroke-linejoin="round" stroke-width="2.300"><circle cx="14" cy="16" r="10.500"/><path d="M11.500 2.500c1 1.800 2 2.500 2.500 3 .5-.5 1.500-1.200 2.500-3"/><path d="M1.800 14v4M26.200 14v4"/><path d="M9.500 12.500v2M16.500 13.500h4"/><path d="M9 19c1.500 2.600 6 3.200 8.500.5 1-1 .8-2.600-.7-2.600-1 0-1.500 1.200-1.200 2.600"/></g></svg></span><span class="cn">出生医学证明</span><span class="new"><i>New</i></span></div>
<div class="card"><span class="circ" style="background:#fde9f2;color:#ef5f9e"><svg viewBox="0 0 28 28"><g fill="none" stroke="currentColor" stroke-width="2.500" stroke-linecap="butt" stroke-linejoin="miter" stroke-linejoin="round"><path d="M1.500 23.500V10.500L10 3l16.500 6.500v14z"/><path d="M10 3v20.500M15 23.500v-9h6v9"/></g></svg></span><span class="cn">房产证</span><span class="new"><i>New</i></span></div>
</div></div>
<div class="sec"><div class="st">交通场景</div><div class="grid">
<div class="card"><span class="circ" style="background:#e4f7e7;color:#52c163"><svg viewBox="0 0 28 28"><g fill="none" stroke="currentColor" stroke-width="2.500" stroke-linecap="round" stroke-linejoin="round"><path d="M5 13.500l1.600-7a3.500 3.500 0 0 1 3.400-2.700h8a3.500 3.500 0 0 1 3.400 2.700l1.600 7"/><path d="M5 13.500a4.500 4.500 0 0 0-3.500 4.400v4.100h2l1 3h3.500l1-3h10l1 3h3.500l1-3h2v-4.100a4.500 4.500 0 0 0-3.500-4.400"/><path d="M8 13l1.200-4.500h9.600L20 13z"/></g><g fill="currentColor"><circle cx="7.700" cy="18" r="1.500"/><circle cx="20.300" cy="18" r="1.500"/></g></svg></span><span class="cn">驾驶证</span></div>
<div class="card"><span class="circ" style="background:#f5e9fd;color:#b96ef0"><svg viewBox="0 0 28 28"><g fill="none" stroke="currentColor" stroke-width="2.500" stroke-linecap="round" stroke-linejoin="round"><path d="M1.500 4.500h13.500v10h-11z"/><path d="M19 4.500h-4M18.500 2.500h4"/><path d="M19 4.500c4 1.500 6.500 6 6.500 10v7h-2.500M17.500 21.500H10M4.500 21.500H2.500v-4h16.500v-13"/><circle cx="7.200" cy="22.500" r="2.700"/><circle cx="20.300" cy="22.500" r="2.700"/></g></svg></span><span class="cn">行驶证</span></div>
<div class="card"><span class="circ" style="background:#f5e9fd;color:#b96ef0"><svg viewBox="0 0 28 28"><g fill="none" stroke="currentColor" stroke-width="2.500" stroke-linecap="round" stroke-linejoin="round" stroke-width="2.800"><rect x="1.500" y="4.500" width="25" height="19" rx="2.500"/></g><text x="14" y="18.200" text-anchor="middle" font-family="Liberation Sans,sans-serif" font-size="11" font-weight="700" fill="currentColor" letter-spacing="-0.300">NO.</text></svg></span><span class="cn">车牌</span></div>
<div class="card"><span class="circ" style="background:#e4f0fd;color:#3478f0"><svg viewBox="0 0 28 28"><g fill="none" stroke="currentColor" stroke-width="2.500" stroke-linecap="butt" stroke-linejoin="miter" stroke-linejoin="round"><path d="M8.500 2v4.500M14 2v4.500M19.500 2v4.500"/><rect x="3" y="9" width="22" height="6" rx="1"/><path d="M3 18v8h22v-8M8 21.500h12"/></g></svg></span><span class="cn">快递面单</span><span class="new"><i>New</i></span></div>
</div></div>
<div class="sec"><div class="st">通用文字</div><div class="grid">
<div class="card"><span class="circ" style="background:#e5f4fd;color:#4cb4f0"><svg viewBox="0 0 28 28"><g fill="none" stroke="currentColor" stroke-width="2.500" stroke-linecap="round" stroke-linejoin="round" stroke-width="2.200"><circle cx="14" cy="14" r="12.500"/><path d="M8.500 9.500h11M14 9.500v10.500"/></g></svg></span><span class="cn">通用文字</span></div>
</div></div>
    </div>
    <div class="sbar"><i></i></div>
    <div class="mf">
      <div class="b-cancel">取 消</div>
      <div class="b-next">下一步</div>
    </div>
    <div class="hl"></div>
    <div class="step"><span>2</span></div>
  </div>
</div>
</body>
</html>
